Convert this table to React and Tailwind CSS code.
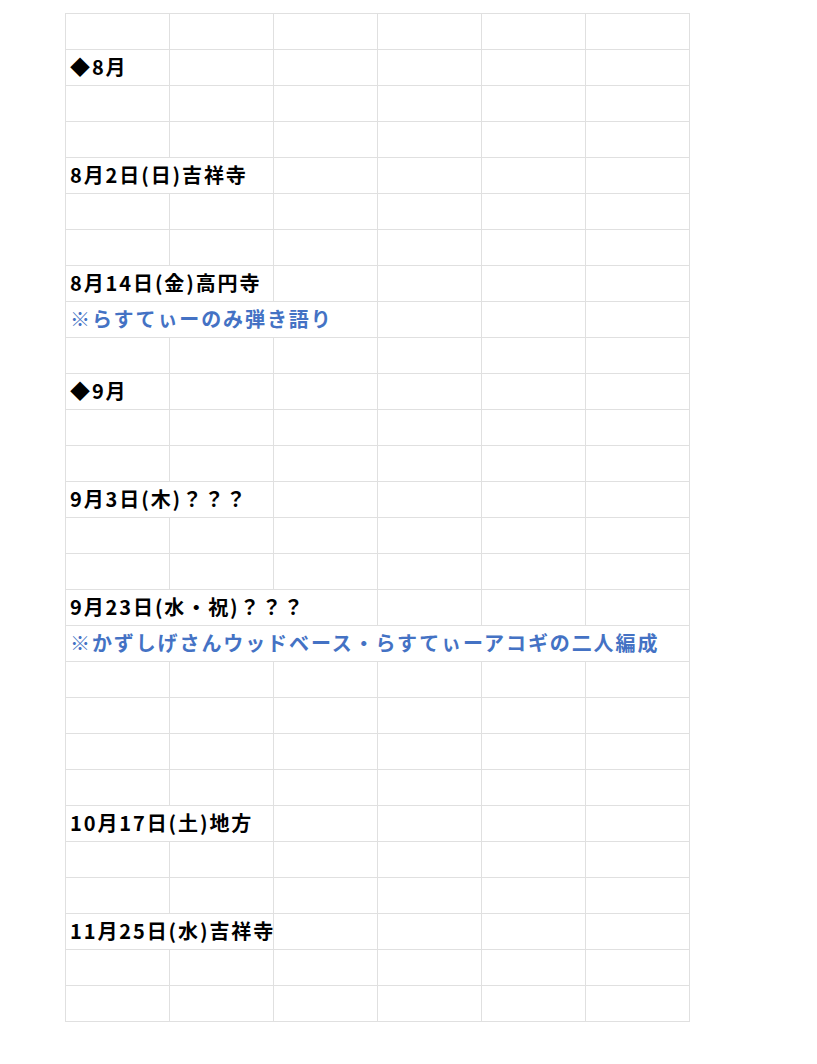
import React from 'react';

const rows = [
  null,
  { text: '◆8月', span: 1 },
  null,
  null,
  { text: '8月2日(日)吉祥寺', span: 2 },
  null,
  null,
  { text: '8月14日(金)高円寺', span: 2 },
  { text: '※らすてぃーのみ弾き語り', span: 3, blue: true },
  null,
  { text: '◆9月', span: 1 },
  null,
  null,
  { text: '9月3日(木)？？？', span: 2 },
  null,
  null,
  { text: '9月23日(水・祝)？？？', span: 3 },
  { text: '※かずしげさんウッドベース・らすてぃーアコギの二人編成', span: 6, blue: true },
  null,
  null,
  null,
  null,
  { text: '10月17日(土)地方', span: 2 },
  null,
  null,
  { text: '11月25日(水)吉祥寺', span: 2 },
  null,
  null,
];

const cell = 'h-[36px] border border-[#e0e0e0] p-0';

export default function App() {
  return (
    <div className="min-h-[1064px] bg-white pl-[65px] pt-[13px]">
      <table
        className="w-[625px] table-fixed border-collapse"
        style={{ fontFamily: '"Noto Sans CJK JP", "Noto Sans", sans-serif' }}
      >
        <colgroup>
          {Array.from({ length: 6 }).map((_, j) => (
            <col key={j} className="w-[104px]" />
          ))}
        </colgroup>
        <tbody>
          {rows.map((row, i) => (
            <tr key={i}>
              {row ? (
                <>
                  <td
                    colSpan={row.span}
                    className={`${cell} whitespace-nowrap pb-[2px] pl-[4px] align-middle text-[20px] font-bold tracking-[1.9px] ${
                      row.blue ? 'text-[#4472c4]' : 'text-black'
                    }`}
                  >
                    {row.text}
                  </td>
                  {Array.from({ length: 6 - row.span }).map((_, j) => (
                    <td key={j} className={cell} />
                  ))}
                </>
              ) : (
                Array.from({ length: 6 }).map((_, j) => <td key={j} className={cell} />)
              )}
            </tr>
          ))}
        </tbody>
      </table>
    </div>
  );
}
